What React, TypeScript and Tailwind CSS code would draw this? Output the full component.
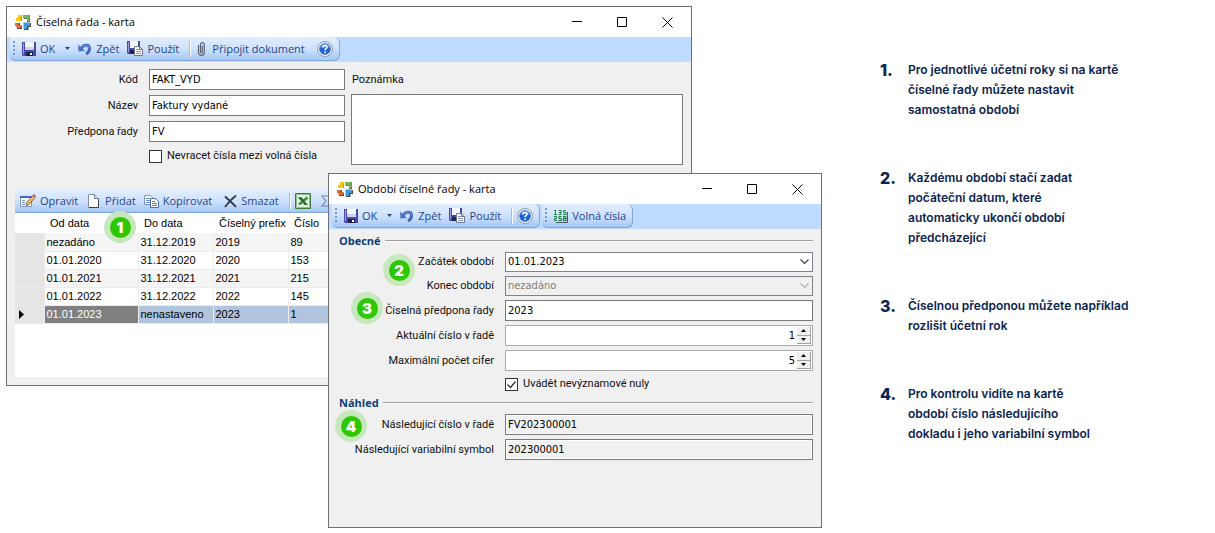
import React, {FC, ReactNode} from 'react';

interface ChildrenProps {
    children: ReactNode;
}

const AppLogo: FC = () => (
    <svg width="16" height="16" viewBox="0 0 16 16" aria-hidden="true">
        <path d="M3.500 1h3v2.500h.5V7H1V4h2.500z" fill="#77705a"/>
        <path d="M3 1h3v3h.5v3H1V4h2z" fill="#f7c80e"/>
        <path d="M8 1h7v7h-3V5H9z" fill="#5d6e50"/>
        <path d="M8 1h6.500v6H12V4H8z" fill="#7cb356"/>
        <path d="M1 9h4v2.500h2V15H2v-2.500H1z" fill="#5a4a44"/>
        <path d="M0 9h3.500v2.500H6V14H1.500v-2H0z" fill="#ec6a29"/>
        <path d="M9 9h7v4h-2.500v3H9z" fill="#4a4a4a"/>
        <path d="M8.500 8.500H15V12h-3v3H8.500z" fill="#4299d8"/>
    </svg>
);

const SaveIcon: FC = () => (
    <svg width="14" height="14" viewBox="0 0 14 14" aria-hidden="true">
        <path d="M0 0h14v14H1l-1-1z" fill="#4a49ad"/>
        <path d="M1 1h1v11H1z" fill="#9d9ce6"/>
        <path d="M3 0h9v8H3z" fill="#f4f6ff"/>
        <path d="M3 5h9v3H3z" fill="#cdd1f2"/>
        <path d="M4 10h7v4H4z" fill="#1f2148"/>
        <path d="M8 11h2v2H8z" fill="#fff"/>
    </svg>
);

const ApplyIcon: FC = () => (
    <svg width="16" height="15" viewBox="0 0 16 15" aria-hidden="true">
        <path d="M0 0h13v13H1l-1-1z" fill="#4a49ad"/>
        <path d="M1 1h1v10H1z" fill="#9d9ce6"/>
        <path d="M3 0h8v7H3z" fill="#f4f6ff"/>
        <path d="M3 9h5v4H3z" fill="#23254d"/>
        <path d="M7.500 5.500h5l3 3v6h-8z" fill="#fff" stroke="#6b7590"/>
        <path d="M9 8.500h3M9 10.500h5M9 12.500h5" stroke="#8694b4"/>
        <path d="M12.500 5.500v3h3" fill="none" stroke="#6b7590"/>
    </svg>
);

const UndoIcon: FC = () => (
    <svg width="14" height="14" viewBox="0 0 14 14" aria-hidden="true">
        <path d="M3 6.500C6 2 11.500 2 11.500 6.500c0 2.500-1.500 4.500-3.500 5.500" fill="none" stroke="#3f67bf" strokeWidth="3"/>
        <path d="M3.500 6.500C6 3 11 2.500 11.500 6.500" fill="none" stroke="#86a9ea"/>
        <path d="M0 2.500l.5 7 6.500-.5z" fill="#4a72c8"/>
    </svg>
);

const HelpIcon: FC = () => (
    <svg width="16" height="16" viewBox="0 0 16 16" aria-hidden="true">
        <circle cx="8" cy="8" r="7.500" fill="#eef2f9" stroke="#8d9ab2"/>
        <circle cx="8" cy="8" r="5.800" fill="#2463d4"/>
        <path d="M3 6.500a5.200 5.200 0 0 1 10 0z" fill="#5f97ee"/>
        <path d="M6 6.500c0-2.600 4-2.600 4-.3C10 7.700 8 7.600 8 9.300" fill="none" stroke="#fff" strokeWidth="1.500"/>
        <path d="M7.200 10.500h1.600V12H7.200z" fill="#fff"/>
    </svg>
);

const ClipIcon: FC = () => (
    <svg width="9" height="15" viewBox="0 0 9 15" aria-hidden="true">
        <path d="M1.500 4v7.500a2.800 2.800 0 0 0 5.800 0V3a2 2 0 0 0-3.800 0v8a.9.9 0 0 0 1.800 0V4.500"
              fill="none" stroke="#5c6470" strokeWidth="1.200"/>
    </svg>
);

const NumbersIcon: FC = () => (
    <svg width="14" height="14" viewBox="0 0 14 14" aria-hidden="true">
        <path d="M13.500 3v10.500H2" fill="none" stroke="#4d5566"/>
        <path d="M0 1.500h2M1.500 1v5M0 5.500h3M4.500 1.500H7v4H4.500M5 3.500h2M12 1.500H9.500v2H12v2H9" fill="none" stroke="#24864a"/>
        <path d="M0 7.500h2.500v2H.5v2H3M7.500 7.500H5v2h2.500v2H4.500M9.500 7.500H12v4H9.500zM9.500 9.500H12" fill="none" stroke="#1b7a3e"/>
    </svg>
);

const EditIcon: FC = () => (
    <svg width="16" height="14" viewBox="0 0 16 14" aria-hidden="true">
        <path d="M.5 2.500h11v10H.5z" fill="#fff" stroke="#8094bc"/>
        <path d="M0 2h12v2H0z" fill="#4169c4"/>
        <path d="M2 6.500h3M2 8.500h3M2 10.500h3" stroke="#7a9be0"/>
        <path d="M6 11.500l1-3.500 6-6.500 2 2-6 7z" fill="#f0bc66" stroke="#6b4a26" strokeWidth=".8"/>
        <path d="M13 1l1-1 2 2-1 1z" fill="#c24040"/>
    </svg>
);

const AddIcon: FC = () => (
    <svg width="11" height="14" viewBox="0 0 11 14" aria-hidden="true">
        <path d="M.5.500h6l4 4v9H.5z" fill="#fff" stroke="#8290aa"/>
        <path d="M6.500.500v4h4" fill="#dbe5f5" stroke="#6c7c98"/>
        <path d="M10.500 5v8.500H1" fill="none" stroke="#39424f"/>
    </svg>
);

const CopyIcon: FC = () => (
    <svg width="15" height="13" viewBox="0 0 15 13" aria-hidden="true">
        <path d="M.5.500h6l2 2v7h-8z" fill="#fff" stroke="#7c95c4"/>
        <path d="M2 3.500h4M2 5.500h4M2 7.500h4" stroke="#6d8ed2"/>
        <path d="M6.500 3.500h5l3 3v6h-8z" fill="#fff" stroke="#4a6bb0"/>
        <path d="M8 6.500h3M8 8.500h5M8 10.500h5" stroke="#4f78cc"/>
    </svg>
);

const DeleteIcon: FC = () => (
    <svg width="13" height="13" viewBox="0 0 13 13" aria-hidden="true">
        <path d="M1 1.500C5 5 9 8.500 12 12M12 .5C8 3.500 4 8 1 12" fill="none" stroke="#2f3642" strokeWidth="1.800"/>
    </svg>
);

const ExcelIcon: FC = () => (
    <svg width="16" height="16" viewBox="0 0 16 16" aria-hidden="true">
        <path d="M.5.500h15v15H.5z" fill="#e5f2e1" stroke="#3a7d3a"/>
        <path d="M1.500 1.500h13v13h-13z" fill="none" stroke="#8fbd88"/>
        <path d="M3 4.500h3.500L13 12H9.500z" fill="#216b2c"/>
        <path d="M12.500 4.500L4 11.500" stroke="#3f8c42" strokeWidth="2.500"/>
        <path d="M3 4.500h3.500l3 3.500-1.500 1z" fill="#216b2c"/>
    </svg>
);

const SigmaIcon: FC = () => (
    <svg width="10" height="12" viewBox="0 0 10 12" aria-hidden="true">
        <path d="M9 2.500V1H1l4 5-4 5h8V9.500" fill="none" stroke="#7088b0" strokeWidth="1.200"/>
    </svg>
);

const Chevron: FC = () => (
    <svg className="pointer-events-none absolute right-1 top-1.5" width="9" height="7" viewBox="0 0 9 7" aria-hidden="true">
        <path d="M.5 1.500l4 4 4-4" fill="none" stroke="currentColor" strokeWidth="1.200"/>
    </svg>
);

const Badge: FC<{ value: number; className: string }> = ({value, className}) => (
    <span className={`absolute z-10 flex size-8 items-center justify-center rounded-full bg-[#c7e8bd] ${className}`}>
        <span
            className="flex size-[21px] items-center justify-center rounded-full bg-[#2dc800] font-['Inter',sans-serif] text-[15px] leading-none font-black text-white">
            {value}
        </span>
    </span>
);

const TitleBar: FC<{ title: string }> = ({title}) => (
    <header className="flex h-[30px] shrink-0 items-center bg-white pl-2 text-black">
        <AppLogo/>
        <h2 className="flex-1 pl-[5px] font-['Open_Sans',sans-serif] text-[11px]">{title}</h2>
        <button aria-label="Minimalizovat" className="flex h-full w-[45px] items-center justify-center">
            <svg width="10" height="10" viewBox="0 0 10 10"><path d="M0 4.500h10" stroke="#000"/></svg>
        </button>
        <button aria-label="Maximalizovat" className="flex h-full w-[45px] items-center justify-center">
            <svg width="10" height="10" viewBox="0 0 10 10"><path d="M.5.500h9v9h-9z" fill="none" stroke="#000"/></svg>
        </button>
        <button aria-label="Zavřít" className="flex h-full w-[47px] items-center justify-center">
            <svg width="11" height="11" viewBox="0 0 11 11"><path d="M.5.500l10 10M10.500.500l-10 10" stroke="#000"/></svg>
        </button>
    </header>
);

const ToolStrip: FC<ChildrenProps> = ({children}) => (
    <div
        className="flex h-6 items-center rounded-md rounded-tl-none border-r border-b border-[#7fa5dc] bg-linear-to-b from-[#e2eeff] via-[#cfe2fd] to-[#a6c8f4] pr-1.5 pl-[3px]">
        <svg className="mr-[7px]" width="2" height="15" viewBox="0 0 2 15" aria-hidden="true">
            <path d="M0 0h2v2H0zM0 4h2v2H0zM0 8h2v2H0zM0 12h2v2H0z" fill="#6f9ad8"/>
        </svg>
        {children}
    </div>
);

const ToolButton: FC<{ icon: ReactNode; label?: string; ariaLabel?: string; className?: string }> = (props) => (
    <button aria-label={props.ariaLabel}
            className={`flex shrink-0 items-center gap-1 font-['Open_Sans',sans-serif] text-[11px] whitespace-nowrap text-[#1e4690] ${props.className ?? ""}`}>
        {props.icon}
        {props.label}
    </button>
);

const Separator: FC = () => <span className="h-4 w-0.5 shrink-0 border-l border-[#9dbde8] bg-white"/>;

// OK / Zpět / Použít are shared by both cards
const CardActions: FC = () => (
    <>
        <ToolButton icon={<SaveIcon/>} label="OK"/>
        <button aria-label="Další možnosti" className="mr-1.5 ml-2 p-0.5">
            <svg width="5" height="3" viewBox="0 0 5 3"><path d="M0 0h5L2.500 3z" fill="#1e4690"/></svg>
        </button>
        <ToolButton icon={<UndoIcon/>} label="Zpět" className="mr-2"/>
        <ToolButton icon={<ApplyIcon/>} label="Použít" className="mr-2.5"/>
        <Separator/>
    </>
);

const SectionTitle: FC<{ title: string }> = ({title}) => (
    <div className="flex h-[23px] items-center gap-1 pl-0.5">
        <h3 className="font-['Open_Sans',sans-serif] text-[11px] font-bold text-[#0c3c78]">{title}</h3>
        <span className="h-0.5 flex-1 border-t border-[#a0a0a0] bg-white"/>
    </div>
);

const labelFont = "font-['Roboto',sans-serif] whitespace-nowrap";
const labelClass = `pr-[11px] text-right ${labelFont}`;
const inputClass = "h-[21px] w-full min-w-0 border border-[#7a7a7a] px-0.5 text-black outline-none";

const Field: FC<{ id: string; label: string; value: string; readOnly?: boolean }> = ({id, label, value, readOnly}) => (
    <>
        <label htmlFor={id} className={labelClass}>{label}</label>
        <input id={id} defaultValue={value} readOnly={readOnly}
               className={`${inputClass} ${readOnly ? "bg-[#f0f0f0] inset-ring inset-ring-white" : "bg-white"}`}/>
    </>
);

const DateSelect: FC<{ id: string; label: string; value: string; disabled?: boolean }> = (props) => (
    <>
        <label htmlFor={props.id} className={labelClass}>{props.label}</label>
        <div className={`relative ${props.disabled ? "text-[#b0b0b0]" : "text-[#444]"}`}>
            <select id={props.id} disabled={props.disabled}
                    className="block h-5 w-full appearance-none border border-[#7f838e] bg-white px-0.5 text-black disabled:bg-[#f0f0f0] disabled:text-[#7d7d7d] disabled:opacity-100">
                <option>{props.value}</option>
            </select>
            <Chevron/>
        </div>
    </>
);

const Spinner: FC<{ id: string; label: string; value: string }> = ({id, label, value}) => (
    <>
        <label htmlFor={id} className={labelClass}>{label}</label>
        <div className="flex h-[21px] border border-[#ababab] bg-white p-px text-black">
            <input id={id} inputMode="numeric" defaultValue={value}
                   className="w-full min-w-0 pr-0.5 text-right outline-none"/>
            <div className="flex w-3.5 shrink-0 flex-col">
                <button aria-label="Zvýšit"
                        className="flex flex-1 items-center justify-center border-r border-b border-[#a0a0a0] bg-[#f0f0f0]">
                    <svg width="5" height="3" viewBox="0 0 5 3"><path d="M0 3h5L2.500 0z"/></svg>
                </button>
                <button aria-label="Snížit"
                        className="flex flex-1 items-center justify-center border-r border-b border-[#a0a0a0] bg-[#f0f0f0]">
                    <svg width="5" height="3" viewBox="0 0 5 3"><path d="M0 0h5L2.500 3z"/></svg>
                </button>
            </div>
        </div>
    </>
);

const Checkbox: FC<{ label: string; checked?: boolean }> = ({label, checked}) => (
    <label className={`col-start-2 mt-0.5 flex items-center gap-[5px] ${labelFont}`}>
        <span className="relative flex">
            <input type="checkbox" defaultChecked={checked}
                   className="peer size-[13px] appearance-none border border-[#333] bg-white"/>
            <svg className="pointer-events-none absolute inset-0 hidden peer-checked:block" width="13" height="13"
                 viewBox="0 0 13 13">
                <path d="M2.500 6.500l3 3 5-6" fill="none" stroke="#333" strokeWidth="1.300"/>
            </svg>
        </span>
        {label}
    </label>
);

const PeriodTable: FC = () => {
    const periods = [
        {from: "nezadáno", to: "31.12.2019", prefix: "2019", count: "89"},
        {from: "01.01.2020", to: "31.12.2020", prefix: "2020", count: "153"},
        {from: "01.01.2021", to: "31.12.2021", prefix: "2021", count: "215"},
        {from: "01.01.2022", to: "31.12.2022", prefix: "2022", count: "145"},
        {from: "01.01.2023", to: "nenastaveno", prefix: "2023", count: "1", selected: true},
    ];
    const cell = "h-[18px] border-r border-b border-[#ececec] px-0.5 py-0 leading-4";

    return (
        <table className="w-full table-fixed border-collapse font-['Liberation_Sans',sans-serif] text-[11px] text-black">
            <colgroup>
                <col className="w-[29px]"/>
                <col className="w-[94px]"/>
                <col className="w-[75px]"/>
                <col className="w-[75px]"/>
                <col/>
            </colgroup>
            <thead>
            <tr className="h-5 text-left">
                <th aria-label="Řádek"/>
                <th className="relative p-0 pl-1.5 font-normal">
                    Od data
                    <Badge value={1} className="-top-0.5 left-[60px]"/>
                </th>
                <th className="p-0 pl-1.5 font-normal">Do data</th>
                <th className="p-0 pl-1.5 font-normal whitespace-nowrap">Číselný prefix</th>
                <th className="p-0 pl-1.5 font-normal">Číslo</th>
            </tr>
            </thead>
            <tbody>
            {periods.map((period) => (
                <tr key={period.from} className={period.selected ? "bg-[#b0c4de]" : "odd:bg-[#f5f5f5] even:bg-white"}>
                    <td className={`${cell} bg-[#e5e5e5]`}>
                        {period.selected && (
                            <svg className="ml-0.5" width="5" height="9" viewBox="0 0 5 9"><path d="M0 0l5 4.500L0 9z"/></svg>
                        )}
                    </td>
                    <td className={period.selected ? `${cell} bg-[#808080] text-white` : cell}>{period.from}</td>
                    <td className={cell}>{period.to}</td>
                    <td className={cell}>{period.prefix}</td>
                    <td className={cell}>{period.count}</td>
                </tr>
            ))}
            </tbody>
        </table>
    );
}

const windowClass = "flex flex-col border border-[#6c6f73] bg-[#f0f0f0] font-['DejaVu_Sans_Condensed','DejaVu_Sans',sans-serif] text-[11px] leading-[14px] text-[#111]";

const SeriesCard: FC = () => (
    <section className={`col-span-2 col-start-1 row-span-2 row-start-1 ${windowClass}`}>
        <TitleBar title="Číselná řada - karta"/>
        <nav className="flex h-[25px] bg-[#bfdbff] pl-[3px]">
            <ToolStrip>
                <CardActions/>
                <ToolButton icon={<ClipIcon/>} label="Připojit dokument" className="ml-1.5 gap-1.5"/>
                <ToolButton icon={<HelpIcon/>} ariaLabel="Nápověda" className="ml-3"/>
            </ToolStrip>
        </nav>
        <div className="flex gap-1.5 pt-[7px] pr-2">
            <form className="grid grid-cols-[142px_196px] content-start items-center gap-y-[5px]">
                <Field id="kod" label="Kód" value="FAKT_VYD"/>
                <Field id="nazev" label="Název" value="Faktury vydané"/>
                <Field id="predpona" label="Předpona řady" value="FV"/>
                <Checkbox label="Nevracet čísla mezi volná čísla"/>
            </form>
            <div className="flex flex-1 flex-col">
                <label htmlFor="poznamka" className={`h-[25px] pt-1 pl-px ${labelFont}`}>Poznámka</label>
                <textarea id="poznamka" className="h-[71px] resize-none border border-[#7a7a7a] bg-white p-0.5"/>
            </div>
        </div>
        <div className="mx-2 mt-[25px] mb-2 flex-1 bg-white">
            <div
                className="flex h-[23px] items-center overflow-hidden border-b border-[#7fa5dc] bg-linear-to-b from-[#e2eeff] via-[#cfe2fd] to-[#a6c8f4] pl-[5px]">
                <ToolButton icon={<EditIcon/>} label="Opravit" className="mr-2.5"/>
                <ToolButton icon={<AddIcon/>} label="Přidat" className="mr-2 gap-1.5"/>
                <ToolButton icon={<CopyIcon/>} label="Kopírovat" className="mr-3"/>
                <ToolButton icon={<DeleteIcon/>} label="Smazat" className="mr-2.5"/>
                <Separator/>
                <ToolButton icon={<ExcelIcon/>} ariaLabel="Export do Excelu" className="mr-2.5 ml-1"/>
                <ToolButton icon={<SigmaIcon/>} ariaLabel="Součet"/>
            </div>
            <PeriodTable/>
        </div>
    </section>
);

const PeriodCard: FC = () => (
    <section className={`relative z-20 col-span-2 col-start-2 row-span-2 row-start-2 ${windowClass}`}>
        <TitleBar title="Období číselné řady - karta"/>
        <nav className="flex h-[25px] gap-0.5 bg-[#bfdbff] pl-[3px]">
            <ToolStrip>
                <CardActions/>
                <ToolButton icon={<HelpIcon/>} ariaLabel="Nápověda" className="ml-1"/>
            </ToolStrip>
            <ToolStrip>
                <ToolButton icon={<NumbersIcon/>} label="Volná čísla"/>
            </ToolStrip>
        </nav>
        <form className="px-2 pb-[67px]">
            <SectionTitle title="Obecné"/>
            <div className="relative grid grid-cols-[168px_1fr] items-center gap-y-1">
                <DateSelect id="zacatek" label="Začátek období" value="01.01.2023"/>
                <DateSelect id="konec" label="Konec období" value="nezadáno" disabled/>
                <Field id="ciselna-predpona" label="Číselná předpona řady" value="2023"/>
                <Spinner id="aktualni" label="Aktuální číslo v řadě" value="1"/>
                <Spinner id="maximalni" label="Maximální počet cifer" value="5"/>
                <Checkbox label="Uvádět nevýznamové nuly" checked/>
                <Badge value={2} className="top-0.5 left-[46px]"/>
                <Badge value={3} className="top-10 left-3.5"/>
            </div>
            <SectionTitle title="Náhled"/>
            <div className="relative grid grid-cols-[168px_1fr] items-center gap-y-1">
                <Field id="nasledujici-cislo" label="Následující číslo v řadě" value="FV202300001" readOnly/>
                <Field id="nasledujici-symbol" label="Následující variabilní symbol" value="202300001" readOnly/>
                <Badge value={4} className="-top-1 -left-0.5"/>
            </div>
        </form>
    </section>
);

const Steps: FC = () => {
    const steps = [
        "Pro jednotlivé účetní roky si na kartě\nčíselné řady můžete nastavit\nsamostatná období",
        "Každému období stačí zadat\npočáteční datum, které\nautomaticky ukončí období\npředcházející",
        "Číselnou předponou můžete například\nrozlišit účetní rok",
        "Pro kontrolu vidíte na kartě\nobdobí číslo následujícího\ndokladu i jeho variabilní symbol",
    ];
    return (
        <ol className="flex flex-col gap-12 pt-[60px] pl-[58px] font-['Inter',sans-serif] text-[#0a2350]">
            {steps.map((step, index) => (
                <li key={step} className="flex">
                    <b className="w-7 shrink-0 text-base leading-5 font-extrabold">{index + 1}.</b>
                    <p className="text-xs leading-5 font-semibold whitespace-pre-line">{step}</p>
                </li>
            ))}
        </ol>
    );
}

const App: FC = () => (
    <main className="grid min-h-screen grid-cols-[minmax(0,1fr)_393px] bg-white">
        <div
            className="grid grid-cols-[322px_minmax(0,1fr)_130px] grid-rows-[167px_213px_auto] content-start pt-1.5 pl-1.5">
            <SeriesCard/>
            <PeriodCard/>
        </div>
        <Steps/>
    </main>
);

export default App;
